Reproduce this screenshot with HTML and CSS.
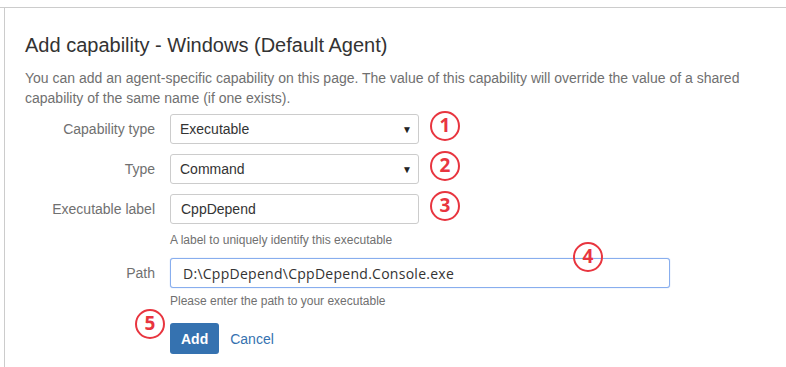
FILE: index.html
```html
<!DOCTYPE html>
<html>
<head>
<meta charset="utf-8">
<link rel="stylesheet" href="styles.css">
</head>
<body>
<div class="topbar"></div>
<div class="panel">
  <h1 class="title">Add capability - Windows (Default Agent)</h1>
  <p class="desc">You can add an agent-specific capability on this page. The value of this capability will override the value of a shared capability of the same name (if one exists).</p>
  <form class="form">
    <div class="row">
      <label class="label">Capability type</label>
      <div class="field">
        <div class="select"><span>Executable</span><span class="arrow">&#9660;</span></div>
        <span class="badge b1">1</span>
      </div>
    </div>
    <div class="row">
      <label class="label">Type</label>
      <div class="field">
        <div class="select"><span>Command</span><span class="arrow">&#9660;</span></div>
        <span class="badge b2">2</span>
      </div>
    </div>
    <div class="row">
      <label class="label">Executable label</label>
      <div class="field">
        <div class="input"><span>CppDepend</span></div>
        <span class="badge b3">3</span>
        <div class="help help-label">A label to uniquely identify this executable</div>
      </div>
    </div>
    <div class="row">
      <label class="label">Path</label>
      <div class="field">
        <div class="input input-wide focus"><span class="path">D:\CppDepend\CppDepend.Console.exe</span></div>
        <span class="badge b4">4</span>
        <div class="help help-path">Please enter the path to your executable</div>
      </div>
    </div>
    <div class="row row-buttons">
      <span></span>
      <div class="field buttons">
        <span class="badge b5">5</span>
        <button type="button" class="btn">Add</button>
        <a class="cancel">Cancel</a>
      </div>
    </div>
  </form>
</div>
</body>
</html>
```

FILE: styles.css
```css
html, body {
  margin: 0;
  padding: 0;
  background: #ffffff;
  font-family: "Liberation Sans", Arial, sans-serif;
  color: #333333;
}
.topbar {
  height: 7px;
  border-bottom: 1px solid #cccccc;
}
.panel {
  margin-left: 4px;
  border-left: 1px solid #cccccc;
  padding: 25px 0 0 20px;
  height: 359px;
  box-sizing: border-box;
  overflow: hidden;
}
.title {
  margin: 0;
  font-size: 20px;
  line-height: 24px;
  font-weight: normal;
  color: #333333;
}
.desc {
  margin: 11px 0 0 0;
  font-size: 14px;
  line-height: 20px;
  color: #707070;
  max-width: 740px;
}
.form {
  margin-top: 6px;
  display: flex;
  flex-direction: column;
  gap: 10px;
}
.row {
  display: grid;
  grid-template-columns: 130px 1fr;
  column-gap: 15px;
  align-items: start;
}
.label {
  text-align: right;
  font-size: 14px;
  line-height: 30px;
  color: #707070;
}
.field {
  position: relative;
  display: flex;
  flex-direction: column;
}
.select, .input {
  box-sizing: border-box;
  width: 249px;
  height: 30px;
  border: 1px solid #cccccc;
  border-radius: 3px;
  display: flex;
  align-items: center;
  justify-content: space-between;
  padding: 0 6px 0 9px;
  font-size: 14px;
  color: #333333;
  background: #fff;
}
.input { padding-left: 10px; }
.arrow {
  font-size: 10px;
  color: #222;
}
.input-wide {
  width: 500px;
  padding-left: 12px;
}
.focus {
  border-color: #88aeee;
  box-shadow: 0 0 1px #88aeee;
}
.path {
  font-family: "Open Sans", "Noto Sans", sans-serif;
  font-size: 14px;
  letter-spacing: 0.27px;
}
.help {
  font-size: 12px;
  line-height: 16px;
  color: #707070;
}
.help-label { margin-top: 8px; }
.help-path { margin-top: 5px; }
.row-buttons { margin-top: 4px; }
.buttons {
  flex-direction: row;
  align-items: center;
  gap: 11px;
}
.btn {
  height: 31px;
  padding: 0 11px;
  border: 0;
  border-radius: 3px;
  background: #3572b0;
  color: #fff;
  font-family: "Liberation Sans", Arial, sans-serif;
  font-weight: bold;
  font-size: 14px;
}
.cancel {
  color: #3572b0;
  font-size: 14px;
}
.badge {
  position: absolute;
  box-sizing: border-box;
  width: 30px;
  height: 30px;
  border: 2px solid #e8353f;
  border-radius: 50%;
  color: #e8353f;
  font-family: "Open Sans", "Liberation Sans", sans-serif;
  font-weight: bold;
  font-size: 19px;
  line-height: 25px;
  text-align: center;
}
.b1, .b2, .b3 { left: 260px; top: -3px; }
.b4 { left: 403px; top: -16px; }
.b5 { left: -35px; top: -14px; }
```
